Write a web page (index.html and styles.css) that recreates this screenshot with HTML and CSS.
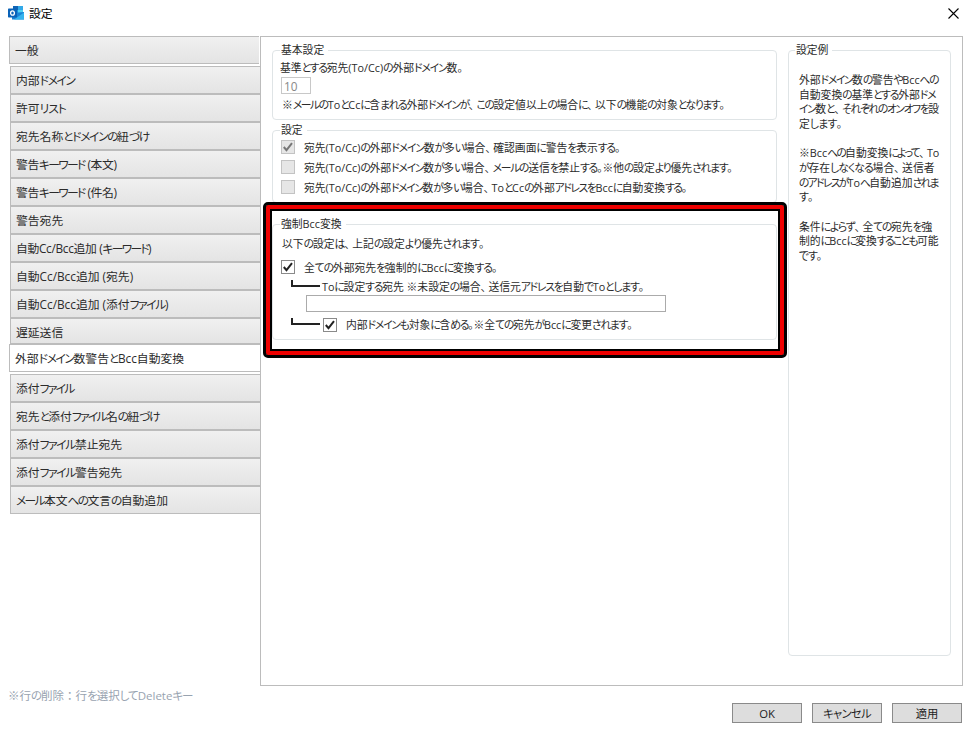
FILE: index.html
```
<!DOCTYPE html>
<html lang="ja">
<head>
    <meta charset="UTF-8">
    <title>設定</title>
    <link rel="stylesheet" href="styles.css">
</head>
<body>
    <div class="titlebar">
        <svg class="app-icon" width="17" height="16" viewBox="0 0 17 16">
            <path d="M5 1h10v9H5z" fill="#1490df"/>
            <path d="M5 1h5v4H5z" fill="#0f64b5"/>
            <path d="M10 1h5v4h-5z" fill="#32a9e8"/>
            <path d="M10 5h5v4h-5z" fill="#50d0f2"/>
            <path d="M4 8l12-1v7.500H4z" fill="#1a83d6"/>
            <path d="M16 7.500v7H6z" fill="#35b4ee"/>
            <rect x="0" y="3.500" width="9" height="9" rx="0.700" fill="#0a62b8"/>
            <ellipse cx="4.500" cy="8" rx="1.900" ry="2.200" fill="none" stroke="#fff" stroke-width="1.300"/>
        </svg>
        <span class="title">設定</span>
        <svg class="close" width="11" height="11" viewBox="0 0 11 11">
            <path d="M0.500 0.500l10 10M10.500 0.500l-10 10" stroke="#000" stroke-width="1.100"/>
        </svg>
    </div>

    <div class="content">
        <div class="tabs">
            <div class="tab general">一般</div>
            <div class="tab"><span class="jp">内部ドメイン</span></div>
            <div class="tab"><span class="jp k10">許可リスト</span></div>
            <div class="tab"><span class="jp">宛先名称とドメインの紐づけ</span></div>
            <div class="tab"><span class="jp k16">警告キーワード (本文)</span></div>
            <div class="tab"><span class="jp k16">警告キーワード (件名)</span></div>
            <div class="tab">警告宛先</div>
            <div class="tab"><span class="jp k16">自動Cc/Bcc追加 (キーワード)</span></div>
            <div class="tab">自動Cc/Bcc追加 (宛先)</div>
            <div class="tab"><span class="jp">自動Cc/Bcc追加 (添付ファイル)</span></div>
            <div class="tab last">遅延送信</div>
            <div class="tab selected"><span class="jp">外部ドメイン数警告とBcc自動変換</span></div>
            <div class="tab"><span class="jp k17">添付ファイル</span></div>
            <div class="tab"><span class="jp k17">宛先と添付ファイル名の紐づけ</span></div>
            <div class="tab"><span class="jp">添付ファイル禁止宛先</span></div>
            <div class="tab"><span class="jp">添付ファイル警告宛先</span></div>
            <div class="tab"><span class="jp k17">メール本文への文言の自動追加</span></div>
        </div>

        <div class="panel">
            <div class="settings">
                <fieldset class="group basic">
                    <legend>基本設定</legend>
                    <div class="row base-label"><span class="jp k11">基準とする宛先(To/Cc)の外部ドメイン数。</span></div>
                    <input class="count" type="text" value="10" disabled>
                    <div class="row note"><span class="jp k14">※メールのToとCcに含まれる外部ドメインが、この設定値以上の場合に、以下の機能の対象となります。</span></div>
                </fieldset>

                <fieldset class="group options">
                    <legend>設定</legend>
                    <label class="row check">
                        <span class="box disabled"><svg width="12" height="12" viewBox="0 0 12 12"><path d="M1.800 6l2.700 3.200L10 2.200"/></svg></span>
                        <span class="jp k11">宛先(To/Cc)の外部ドメイン数が多い場合、確認画面に警告を表示する。</span>
                    </label>
                    <label class="row check">
                        <span class="box disabled"></span>
                        <span class="jp k13">宛先(To/Cc)の外部ドメイン数が多い場合、メールの送信を禁止する。※他の設定より優先されます。</span>
                    </label>
                    <label class="row check">
                        <span class="box disabled"></span>
                        <span class="jp k14">宛先(To/Cc)の外部ドメイン数が多い場合、ToとCcの外部アドレスをBccに自動変換する。</span>
                    </label>
                </fieldset>

                <fieldset class="group force">
                    <legend>強制Bcc変換</legend>
                    <div class="row note"><span class="jp k10">以下の設定は、上記の設定より優先されます。</span></div>
                    <label class="row check all">
                        <span class="box"><svg width="12" height="12" viewBox="0 0 12 12"><path d="M1.800 6l2.700 3.200L10 2.200"/></svg></span>
                        <span class="jp k11">全ての外部宛先を強制的にBccに変換する。</span>
                    </label>
                    <div class="row branch">
                        <span class="elbow"></span>
                        <span class="jp k13">Toに設定する宛先 ※未設定の場合、送信元アドレスを自動でToとします。</span>
                    </div>
                    <input class="address" type="text">
                    <label class="row branch inner">
                        <span class="elbow"></span>
                        <span class="box"><svg width="12" height="12" viewBox="0 0 12 12"><path d="M1.800 6l2.700 3.200L10 2.200"/></svg></span>
                        <span class="jp k13">内部ドメインも対象に含める。※全ての宛先がBccに変更されます。</span>
                    </label>
                    <div class="highlight"></div>
                </fieldset>
            </div>

            <fieldset class="group example">
                <legend>設定例</legend>
                <p>
                    <span class="jp k14">外部ドメイン数の警告やBccへの</span><br>
                    <span class="jp k11">自動変換の基準とする外部ドメ</span><br>
                    <span class="jp k14">イン数と、それぞれのオンオフを設</span><br>
                    <span class="jp k07">定します。</span>
                </p>
                <p>
                    <span class="jp k17">※Bccへの自動変換によって、To</span><br>
                    <span class="jp k10">が存在しなくなる場合、送信者</span><br>
                    <span class="jp k17">のアドレスがToへ自動追加されま</span><br>
                    <span class="jp k10">す。</span>
                </p>
                <p>
                    <span class="jp k13">条件によらず、全ての宛先を強</span><br>
                    <span class="jp k17">制的にBccに変換することも可能</span><br>
                    <span class="jp k10">です。</span>
                </p>
            </fieldset>
        </div>
    </div>

    <div class="footer">
        <span class="hint"><span class="jp k10">※行の削除：行を選択してDeleteキー</span></span>
        <div class="buttons">
            <button type="button">OK</button>
            <button type="button"><span class="jp k07">キャンセル</span></button>
            <button type="button">適用</button>
        </div>
    </div>

    <script src="kana.js"></script>
</body>
</html>
```
FILE: styles.css
```
* {
    box-sizing: border-box;
}
body {
    margin: 0;
    height: 741px;
    overflow: hidden;
    background-color: #fff;
    color: #2b2b2b;
    font-family: "Open Sans", "Noto Sans CJK JP", sans-serif;
    font-size: 10.8px;
    font-feature-settings: "palt";
    white-space: nowrap;
}
.titlebar {
    display: flex;
    align-items: center;
    height: 36px;
    padding: 0 10px 10px 8px;
}
.title {
    margin: -1px 0 0 4px;
    font-size: 11.8px;
    color: #000;
}
.close {
    margin-left: auto;
}
.content {
    display: flex;
    height: 650px;
    padding: 0 6px 0 9px;
}

/* left side tabs */
.tabs {
    width: 251px;
    font-size: 11.8px;
}
.tab {
    display: flex;
    align-items: center;
    height: 28px;
    margin-left: 1px;
    padding: 0 0 2px 5px;
    border: 1px solid #bcbcbc;
    border-right: none;
    background: linear-gradient(#f0f0f0, #e4e4e4);
}
.tab.general {
    margin: 0 1px 2px 0;
}
.tab.last {
    height: 26px;
    padding-bottom: 0;
}
.tab.selected {
    height: 28px;
    margin: 0 0 2px 0;
    background: #fff;
}

/* main panel */
.panel {
    display: flex;
    flex: 1;
    gap: 11px;
    padding: 5px 11px 0;
    border: 1px solid #bcbcbc;
}
.settings {
    width: 505px;
}
.group {
    min-width: 0;
    margin: 0;
    padding: 0 0 0 7px;
    border: 1px solid #dfe4e6;
    border-radius: 4px;
}
.group legend {
    height: 16px;
    line-height: 16px;
    padding: 0 4px 0 1px;
}
.row {
    display: flex;
    align-items: center;
    height: 20px;
}
.row .jp {
    margin-top: -1px;
}
.basic {
    height: 78px;
}
.basic .base-label {
    height: 19px;
}
.note {
    padding-left: 2px;
}
.options {
    height: 81px;
    margin-top: 2px;
}
.options legend {
    margin-bottom: -1px;
}
.force {
    position: relative;
    height: 124px;
    margin-top: 13px;
}
.force .note {
    height: 25px;
    padding-bottom: 2px;
}
.check,
.branch {
    padding-left: 1px;
}
.box {
    display: flex;
    flex: none;
    width: 14px;
    height: 14px;
    margin-right: 9px;
    border: 1px solid #8a8a8a;
    background-color: #fff;
}
.box path {
    fill: none;
    stroke: #222;
    stroke-width: 2;
}
.box.disabled {
    border-color: #c3c3c3;
    background-color: #e6e6e6;
}
.box.disabled path {
    stroke: #777;
}
.branch {
    height: 18px;
    padding-left: 11px;
}
.elbow {
    flex: none;
    width: 29px;
    height: 7px;
    margin: 0 2px 6px 0;
    border-left: 2px solid #222;
    border-bottom: 2px solid #222;
}
input {
    display: block;
    padding: 0 2px;
    border: 1px solid #ababab;
    background-color: #fff;
    font: inherit;
}
.count {
    width: 30px;
    height: 17px;
    margin-left: 1px;
    font-size: 11.8px;
    color: #888;
    border-color: #c8c8c8;
}
.address {
    width: 360px;
    height: 17px;
    margin-left: 26px;
}
.inner {
    height: 25px;
}
.inner .elbow {
    margin-right: 3px;
}
.highlight {
    position: absolute;
    left: -10px;
    top: -30px;
    width: 524px;
    height: 156px;
    border: 3px solid #000;
    border-radius: 5px;
    box-shadow: inset 0 0 0 4px #ee0000, inset 0 0 0 6px #000;
}
.example {
    width: 163px;
    height: 614px;
    padding-left: 10px;
}
.example legend {
    margin-left: -4px;
}
.example p {
    margin: 15px 0 0;
    line-height: 14.6px;
}

/* bottom */
.footer {
    display: flex;
    justify-content: space-between;
    padding: 0 7px 0 8px;
}
.hint {
    padding-top: 2px;
    font-size: 11.5px;
    line-height: 16px;
    color: #98a3b0;
}
.buttons {
    display: flex;
    gap: 10px;
    padding-top: 17px;
}
button {
    width: 70px;
    height: 20px;
    padding: 0;
    border: 1px solid #8a8a8a;
    background-color: #ddd;
    color: #222;
    font: inherit;
    font-size: 11.3px;
}

/* kana spacing */
.kana { letter-spacing: -1.4px; }
.comma { letter-spacing: 2.5px; }
.colon { font-feature-settings: normal; }
.k07 .kana { letter-spacing: -0.7px; }
.k10 .kana { letter-spacing: -1px; }
.k11 .kana { letter-spacing: -1.15px; }
.k13 .kana { letter-spacing: -1.25px; }
.k14 .kana { letter-spacing: -1.4px; }
.k17 .kana { letter-spacing: -1.7px; }
.k16 { letter-spacing: -0.3px; }
.k16 .kana { letter-spacing: -1.7px; }
```
FILE: kana.js
```
// wrap every run of kana so it can be set tighter than the kanji
document.querySelectorAll('.jp').forEach(el => {
    el.innerHTML = el.textContent
        .replace(/[ぁ-んァ-ヶー]+/g, '<span class="kana">$&</span>')
        .replace(/、/g, '<span class="comma">、</span>')
        .replace(/：/g, '<span class="colon">：</span>');
});
```
